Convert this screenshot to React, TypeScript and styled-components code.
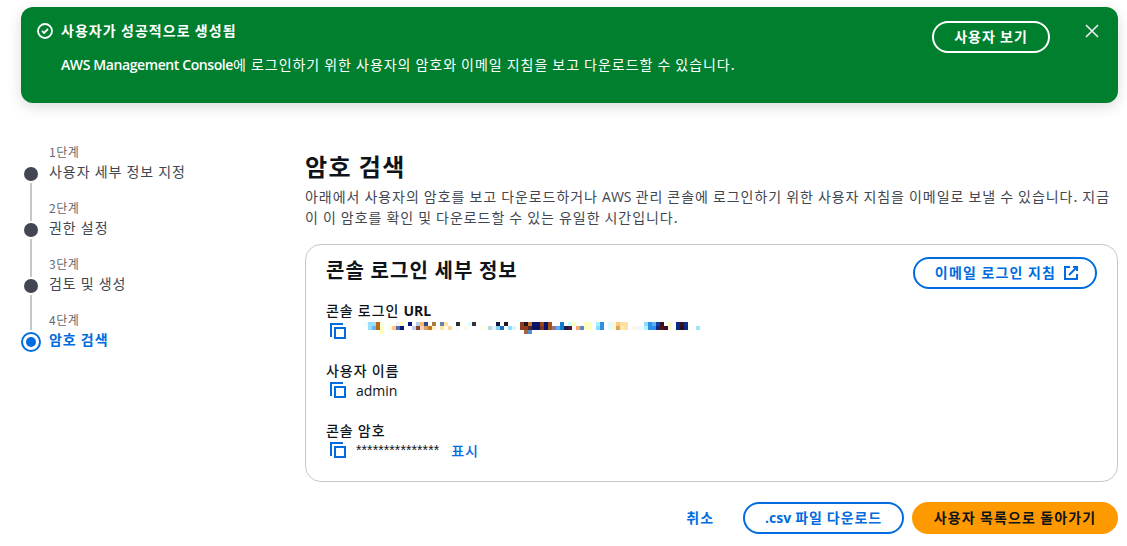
import * as React from 'react';
import styled, { createGlobalStyle } from 'styled-components';

const GlobalStyle = createGlobalStyle`
  * {
    box-sizing: border-box;
  }
  body {
    margin: 0;
    background-color: #fff;
    color: #0f141a;
    font-family: 'Noto Sans CJK KR', sans-serif;
    font-size: 14px;
    line-height: 20px;
    letter-spacing: 0.97px;
    overflow: hidden;
  }
`;

interface TextProps {
  $spacing?: string;
}
interface LatinProps {
  $weight?: number;
  $spacing?: string;
}
interface ButtonProps {
  $color: string;
  $background?: string;
  $width: number;
  $spacing?: string;
}
interface StepProps {
  $active: boolean;
}

const Latin = styled.span<LatinProps>`
  font-family: 'Open Sans', 'Noto Sans CJK KR', sans-serif;
  font-weight: ${props => props.$weight || 400};
  letter-spacing: ${props => props.$spacing || '0'};
`;
const Page = styled.div`
  width: 1127px;
  height: 546px;
  padding: 7px 9px 0 21px;
`;
const Flash = styled.div`
  height: 96px;
  display: flex;
  align-items: flex-start;
  padding: 14px 16px;
  border-radius: 12px;
  background-color: #00802f;
  color: #fff;
  box-shadow: 0 4px 14px rgba(0, 7, 22, 0.14);
`;
const FlashIcon = styled.div`
  height: 16px;
  margin: 2px 8px 0 0;
  display: flex;
`;
const FlashText = styled.div`
  flex: 1;
  margin-top: -1px;
  white-space: nowrap;
`;
const FlashTitle = styled.div<TextProps>`
  font-weight: 700;
  letter-spacing: ${props => props.$spacing};
`;
const FlashBody = styled.div<TextProps>`
  margin-top: 14px;
  letter-spacing: ${props => props.$spacing};
`;
const Button = styled.button<ButtonProps>`
  width: ${props => props.$width}px;
  height: 32px;
  padding: 0 0 2px;
  display: flex;
  align-items: center;
  justify-content: center;
  border: 2px solid ${props => props.$background || props.$color};
  border-radius: 16px;
  background-color: ${props => props.$background || 'transparent'};
  color: ${props => props.$color};
  font: inherit;
  font-weight: 700;
  letter-spacing: ${props => props.$spacing || '0.9px'};
  white-space: nowrap;
  cursor: pointer;

  svg {
    margin: 2px -4px 0 7px;
  }
`;
const CloseButton = styled.button`
  width: 16px;
  height: 16px;
  margin: 2px 2px 0 34px;
  padding: 0;
  border: 0;
  background: none;
  color: #ebebf0;
  cursor: pointer;
`;
const Body = styled.div`
  display: flex;
  margin-top: 40px;
`;
const Steps = styled.ul`
  width: 284px;
  margin: 0;
  padding: 0;
  list-style: none;
`;
const Step = styled.li`
  display: flex;
  height: 56px;
`;
const StepTrack = styled.div`
  width: 20px;
  margin-right: 8px;
  display: flex;
  flex-direction: column;
  align-items: center;
`;
const StepLine = styled.div`
  width: 2px;
  height: ${(props: { $height: number }) => props.$height}px;
  background-color: #c6c6cd;
`;
const StepDot = styled.div<StepProps>`
  width: ${props => (props.$active ? '20px' : '14px')};
  height: ${props => (props.$active ? '20px' : '14px')};
  margin: 2px 0;
  flex-shrink: 0;
  border: ${props => (props.$active ? '2px solid #006ce0' : '0')};
  border-radius: 50%;
  background: ${props => (props.$active ? '#006ce0' : '#424650')} content-box;
  padding: ${props => (props.$active ? '3px' : '0')};
`;
const StepSpacer = styled.div`
  height: 22px;
`;
const StepLabel = styled.div`
  font-size: 12px;
  line-height: 18px;
  letter-spacing: 0.5px;
  color: #656871;
`;
const StepTitle = styled.div<StepProps>`
  color: ${props => (props.$active ? '#006ce0' : '#424650')};
  font-weight: ${props => (props.$active ? 700 : 400)};
  white-space: nowrap;
`;
const Main = styled.main`
  width: 813px;
`;
const Title = styled.h1`
  margin: 7px 0 0;
  font-size: 24px;
  line-height: 32px;
  font-weight: 700;
  letter-spacing: 1.4px;
`;
const Description = styled.p`
  height: 40px;
  margin: 4px 0 0;
  color: #424650;
  letter-spacing: 0.95px;
  white-space: nowrap;
`;
const Card = styled.section`
  height: 238px;
  margin-top: 18px;
  padding: 12px 20px 0;
  border: 1px solid #c6c6cd;
  border-radius: 16px;
`;
const CardHeader = styled.div`
  display: flex;
  justify-content: space-between;
  align-items: flex-start;
`;
const CardTitle = styled.h2`
  margin: 1px 0 0;
  font-size: 20px;
  line-height: 24px;
  font-weight: 700;
  letter-spacing: 1.05px;
`;
const Field = styled.div`
  height: 60px;
`;
const Fields = styled.div`
  margin-top: 11px;
`;
const FieldLabel = styled.div`
  font-weight: 500;
`;
const FieldValue = styled.div`
  height: 20px;
  display: flex;
  align-items: center;
  padding-left: 4px;
`;
const Value = styled.div`
  margin-left: 10px;
`;
const Password = styled(Value)`
  font-family: 'Liberation Sans', sans-serif;
  letter-spacing: 0.1px;
`;
const Mosaic = styled.svg`
  display: block;
  margin: -6px 0 0 18px;
`;
const ShowLink = styled.a`
  margin: -1px 0 0 12px;
  color: #006ce0;
  font-weight: 500;
  cursor: pointer;
`;
const Footer = styled.div`
  display: flex;
  justify-content: flex-end;
  align-items: center;
  gap: 8px;
  margin-top: 20px;
`;
const Cancel = styled.a`
  margin: -3px 21px 0 0;
  color: #006ce0;
  font-weight: 700;
  cursor: pointer;
`;

const steps = ['사용자 세부 정보 지정', '권한 설정', '검토 및 생성', '암호 검색'];

// x, row, colour of each blurred-out cell in the sign-in URL
const cells: [number, number, string][] = [
  [0, 0, '#f0fbff'], [1, 0, '#99e0ff'], [2, 0, '#99e0ff'], [3, 0, '#b8691a'],
  [1, 1, '#99e0ff'], [2, 1, '#6bb8f5'], [3, 1, '#b8691a'], [4, 0, '#fffde6'],
  [4, 1, '#ffffbf'], [4, 2, '#ffffbf'], [6, 0, '#fffff0'], [6, 1, '#fffbe6'],
  [7, 1, '#ffc880'], [8, 0, '#f0f0ff'], [8, 1, '#5a6bb5'], [9, 0, '#ffffc0'],
  [9, 1, '#0c1678'], [11, 0, '#0c1678'], [12, 1, '#c8cbe8'], [13, 0, '#b0d0ec'],
  [13, 1, '#8c431c'], [14, 0, '#ffb56b'], [14, 1, '#f0d0cc'], [15, 0, '#2f4a80'],
  [15, 1, '#d8a35c'], [16, 1, '#c47820'], [17, 0, '#a87845'], [17, 1, '#fff0c8'],
  [19, 0, '#5f87a5'], [19, 1, '#ffe4a8'], [20, 0, '#ffe4a8'], [20, 1, '#fffbe8'],
  [21, 1, '#f5dc9c'], [23, 0, '#282c35'], [23, 1, '#fffafa'], [24, 0, '#fffff0'],
  [25, 1, '#fff8e8'], [26, 0, '#e0fbff'], [27, 0, '#3c3035'], [29, 1, '#fffff0'],
  [30, 1, '#fffff0'], [31, 1, '#b0d8e8'], [32, 1, '#e8f0ff'], [33, 0, '#101840'],
  [33, 1, '#8ccfec'], [34, 1, '#1670c8'], [35, 0, '#281820'], [36, 1, '#90dfff'],
  [37, 1, '#d8f8ff'], [39, 0, '#8c3c18'], [39, 1, '#8c3c18'], [40, 0, '#281020'],
  [40, 1, '#8c3c18'], [40, 2, '#a8643c'], [41, 0, '#c87830'], [41, 1, '#502828'],
  [41, 2, '#5090d0'], [42, 0, '#0c1468'], [42, 1, '#0c1468'], [43, 0, '#0c1468'],
  [43, 1, '#0c1468'], [44, 0, '#984818'], [44, 1, '#803418'], [45, 0, '#0c1468'],
  [45, 1, '#0c1468'], [46, 0, '#a85418'], [46, 1, '#a85418'], [47, 1, '#907888'],
  [48, 1, '#60a8ff'], [49, 0, '#1478d0'], [49, 1, '#1478d0'], [50, 1, '#101c40'],
  [51, 0, '#c8ffff'], [51, 1, '#581030'], [52, 0, '#ffffc0'], [53, 1, '#ffa860'],
  [54, 1, '#6088c8'], [55, 0, '#ffffc0'], [55, 1, '#ffffc0'], [56, 0, '#ffffc0'],
  [56, 1, '#ffffc0'], [58, 0, '#a8f0ff'], [58, 1, '#88dfff'], [59, 0, '#3090e0'],
  [59, 1, '#3090e0'], [61, 0, '#e0fbff'], [61, 1, '#e0fbff'], [62, 0, '#fff8d8'],
  [62, 1, '#fff8d8'], [63, 0, '#ffc880'], [63, 1, '#e0a060'], [64, 0, '#ffe0a0'],
  [64, 1, '#ffe8a8'], [65, 0, '#ffe0a0'], [65, 1, '#ffe0a0'], [67, 1, '#fff4dc'],
  [68, 1, '#f0f8ff'], [69, 1, '#f0f8ff'], [70, 0, '#90dcff'], [70, 1, '#b0f4ff'],
  [71, 0, '#3090e8'], [71, 1, '#3090e8'], [72, 0, '#60b0f8'], [72, 1, '#3090e8'],
  [73, 0, '#1040a0'], [73, 1, '#0c2880'], [74, 0, '#381020'], [74, 1, '#581018'],
  [75, 1, '#381020'], [76, 0, '#fff8c8'], [76, 1, '#fff8d8'], [78, 0, '#0c2880'],
  [78, 1, '#0c2880'], [79, 0, '#381020'], [79, 1, '#281018'], [80, 0, '#103090'],
  [80, 1, '#0c2880'], [83, 1, '#a0e4ff']
];

const CopyIcon = () => (
  <svg width="16" height="16" viewBox="0 0 16 16" fill="none" stroke="#006ce0" strokeWidth="2">
    <path d="M5 5h10v10H5z" />
    <path d="M13 1H1v13" />
  </svg>
);

class App extends React.Component {
  stepList() {
    return steps.map((step, i) => {
      const active = i === steps.length - 1;
      return (
        <Step key={step}>
          <StepTrack>
            {i === 0 ? <StepSpacer /> : <StepLine $height={active ? 19 : 22} />}
            <StepDot $active={active} />
            {!active && <StepLine $height={16} />}
          </StepTrack>
          <div>
            <StepLabel>{i + 1}단계</StepLabel>
            <StepTitle $active={active}>{step}</StepTitle>
          </div>
        </Step>
      );
    });
  }

  render() {
    return (
      <Page>
        <GlobalStyle />
        <Flash>
          <FlashIcon>
            <svg width="16" height="16" viewBox="0 0 16 16" fill="none" stroke="#fff" strokeWidth="1.8">
              <circle cx="8" cy="8" r="7" />
              <path d="M5 7.8l2.1 2.1 3.9-3.9" />
            </svg>
          </FlashIcon>
          <FlashText>
            <FlashTitle $spacing="1.05px">사용자가 성공적으로 생성됨</FlashTitle>
            <FlashBody $spacing="0.96px">
              <Latin $weight={600} $spacing="-0.4px">AWS Management Console</Latin>에 로그인하기 위한
              사용자의 암호와 이메일 지침을 보고 다운로드할 수 있습니다.
            </FlashBody>
          </FlashText>
          <Button $color="#fff" $width={118} $spacing="1px">
            사용자 보기
          </Button>
          <CloseButton aria-label="close">
            <svg width="16" height="16" viewBox="0 0 16 16" fill="none" stroke="currentColor" strokeWidth="1.7">
              <path d="M2 2l12 12M14 2L2 14" />
            </svg>
          </CloseButton>
        </Flash>
        <Body>
          <Steps>{this.stepList()}</Steps>
          <Main>
            <Title>암호 검색</Title>
            <Description>
              아래에서 사용자의 암호를 보고 다운로드하거나 <Latin>AWS</Latin> 관리 콘솔에 로그인하기 위한
              사용자 지침을 이메일로 보낼 수 있습니다. 지금
              <br />이 이 암호를 확인 및 다운로드할 수 있는 유일한 시간입니다.
            </Description>
            <Card>
              <CardHeader>
                <CardTitle>콘솔 로그인 세부 정보</CardTitle>
                <Button $color="#006ce0" $width={184} $spacing="1.2px">
                  이메일 로그인 지침
                  <svg width="16" height="16" viewBox="0 0 16 16" fill="none" stroke="currentColor" strokeWidth="2">
                    <path d="M10 2h4v4" />
                    <path d="M6 10l8-8" />
                    <path d="M14 9.048V14H2V2h5" />
                  </svg>
                </Button>
              </CardHeader>
              <Fields>
                <Field>
                  <FieldLabel>
                    콘솔 로그인 <Latin $weight={700}>URL</Latin>
                  </FieldLabel>
                  <FieldValue>
                    <CopyIcon />
                    <Mosaic width="336" height="12" shapeRendering="crispEdges">
                      {cells.map(([x, y, fill], i) => (
                        <rect key={i} x={x * 4} y={y * 4} width="4" height="4" fill={fill} />
                      ))}
                    </Mosaic>
                  </FieldValue>
                </Field>
                <Field>
                  <FieldLabel>사용자 이름</FieldLabel>
                  <FieldValue>
                    <CopyIcon />
                    <Value>
                      <Latin>admin</Latin>
                    </Value>
                  </FieldValue>
                </Field>
                <Field>
                  <FieldLabel>콘솔 암호</FieldLabel>
                  <FieldValue>
                    <CopyIcon />
                    <Password>***************</Password>
                    <ShowLink>표시</ShowLink>
                  </FieldValue>
                </Field>
              </Fields>
            </Card>
            <Footer>
              <Cancel>취소</Cancel>
              <Button $color="#006ce0" $width={161}>
                <span>
                  <Latin $weight={700}>.csv</Latin> 파일 다운로드
                </span>
              </Button>
              <Button $color="#0f141a" $background="#ff9900" $width={206} $spacing="1.1px">
                사용자 목록으로 돌아가기
              </Button>
            </Footer>
          </Main>
        </Body>
      </Page>
    );
  }
}

export default App;
